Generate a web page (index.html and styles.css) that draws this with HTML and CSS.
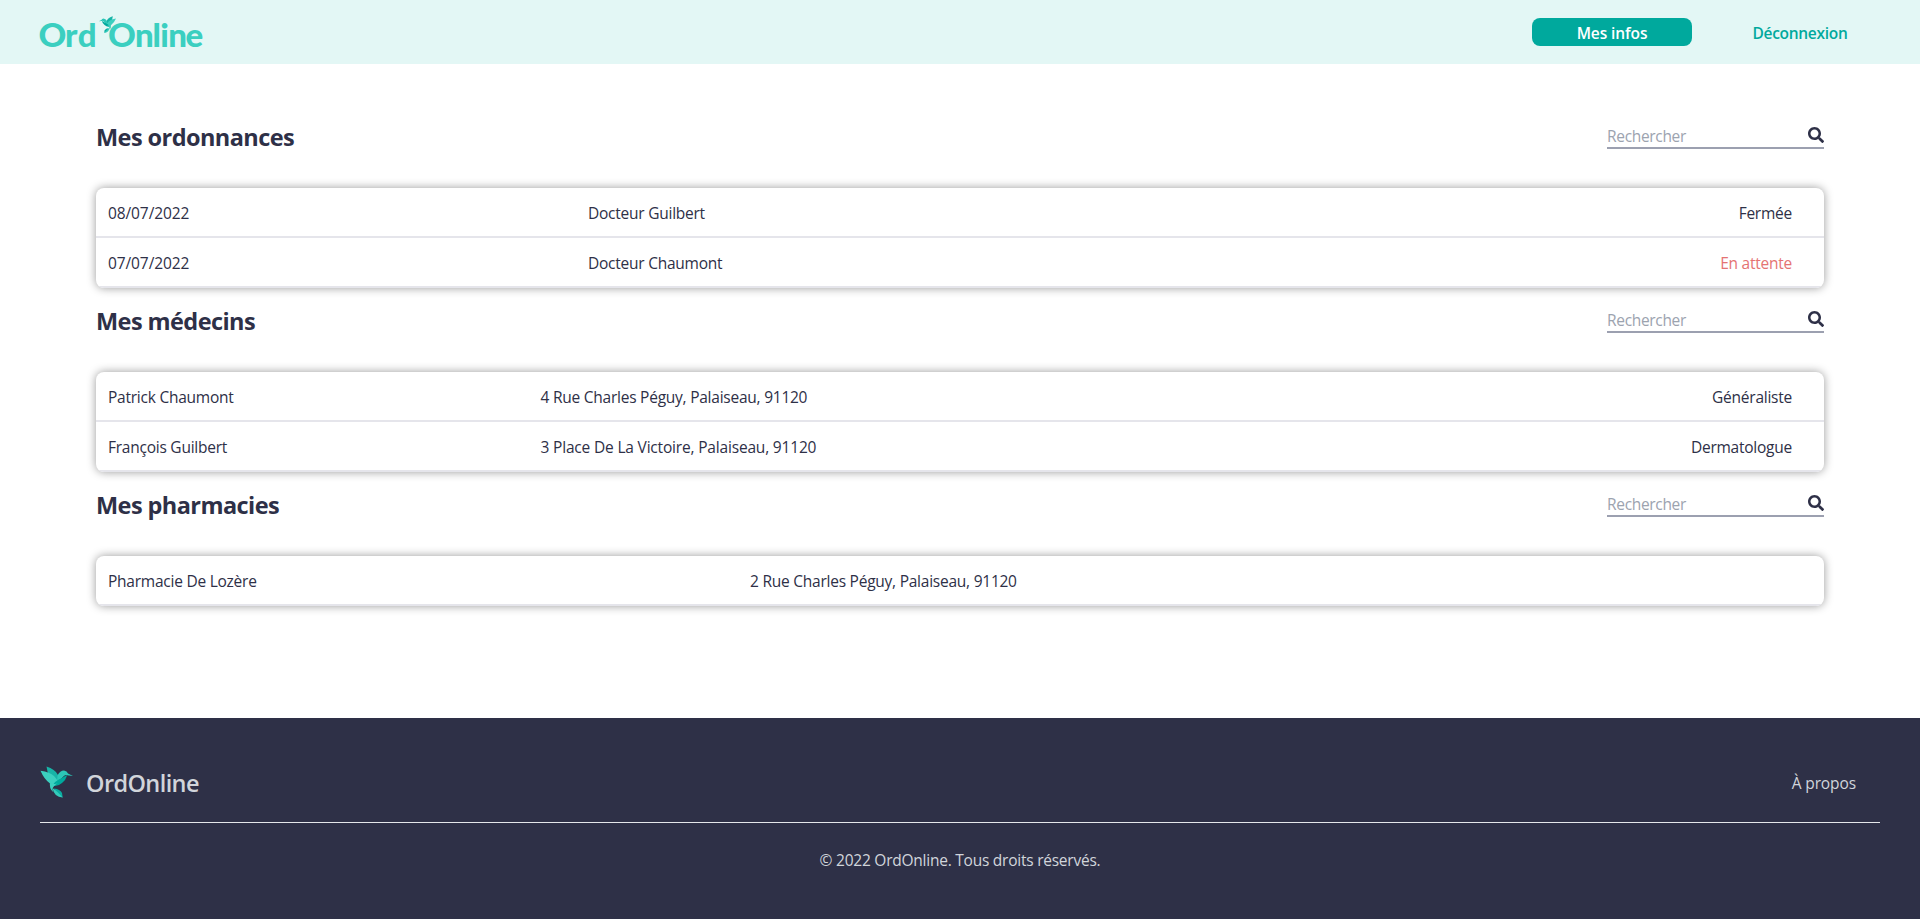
FILE: index.html
```html
<!DOCTYPE html>
<html lang="fr">
<head>
<meta charset="utf-8">
<title>OrdOnline</title>
<link rel="stylesheet" href="styles.css">
</head>
<body>
<svg class="defs" width="0" height="0">
  <symbol id="bird" viewBox="0 0 33 32">
    <path fill="#18b3a7" d="M6.500 0.500Q15 3 18 9L18 16L8 8Z"/>
    <path fill="#3ccfbf" d="M0.500 4.700Q10 6 14 10Q17 13 18 16L13 20Q10 19 10 17.500Q4 13 0.500 4.700Z"/>
    <path fill="#2cc6b7" d="M17.500 9.500Q20 4.500 24 4.500Q27 5 28 7.500L33 10L27 9.300Q25 8 22 12L17 16Z"/>
    <path fill="#00a99d" d="M27 9.300Q26 14 22 17Q18 20.500 14 20L12 21Q14 15 22 12Q25 10 27 9.300Z"/>
    <path fill="#3ccfbf" d="M10 17Q15 19 18 17Q13 20 12.500 23L13 26Q9 22 10 17Z"/>
    <path fill="#0aaea2" d="M14 22.500Q20 23 22 27L22.700 31.500Q17 30 14 22.500Z"/>
    <path fill="#35cbbb" d="M12.500 22Q17 25 22.700 31.500Q14 31 12.500 22Z"/>
  </symbol>
  <symbol id="search" viewBox="0 0 512 512">
    <path d="M505 442.700L405.300 343c-4.500-4.500-10.600-7-17-7H372c27.600-35.300 44-79.700 44-128C416 93.100 322.900 0 208 0S0 93.100 0 208s93.100 208 208 208c48.300 0 92.700-16.400 128-44v16.300c0 6.400 2.500 12.500 7 17l99.700 99.700c9.400 9.400 24.600 9.400 33.900 0l28.300-28.300c9.400-9.400 9.400-24.600.1-34zM208 336c-70.700 0-128-57.200-128-128 0-70.700 57.200-128 128-128 70.700 0 128 57.200 128 128 0 70.700-57.200 128-128 128z"/>
  </symbol>
</svg>

<header class="topbar">
  <svg class="logo" width="180" height="64" viewBox="32 0 180 64" aria-label="Ord'Online">
    <text class="logo-text" transform="translate(38.600 47.200) scale(1.040 1)">O</text>
    <text class="logo-text" y="47.200" x="65 77.800">rd</text>
    <text class="logo-text" transform="translate(108 47.200) scale(1.040 1)">O</text>
    <text class="logo-text" y="47.200" x="135 152.500 160.300 168.300 185.600">nline</text>
    <g transform="translate(116.500 16) scale(-1 1)"><use href="#bird" width="18" height="17"/></g>
  </svg>
  <nav class="nav">
    <a class="nav-link primary">Mes infos</a>
    <a class="nav-link">Déconnexion</a>
  </nav>
</header>

<main class="content">
  <section class="block">
    <div class="block-head">
      <h2 class="title">Mes ordonnances</h2>
      <div class="search"><span class="placeholder">Rechercher</span><svg class="icon"><use href="#search"/></svg></div>
    </div>
    <div class="card orders">
      <div class="row"><span class="date">08/07/2022</span><span>Docteur Guilbert</span><span>Fermée</span></div>
      <div class="row"><span class="date">07/07/2022</span><span>Docteur Chaumont</span><span class="pending">En attente</span></div>
    </div>
  </section>
  <section class="block">
    <div class="block-head">
      <h2 class="title">Mes médecins</h2>
      <div class="search"><span class="placeholder">Rechercher</span><svg class="icon"><use href="#search"/></svg></div>
    </div>
    <div class="card doctors">
      <div class="row"><span>Patrick Chaumont</span><span>4 Rue Charles Péguy, Palaiseau, 91120</span><span>Généraliste</span></div>
      <div class="row"><span>François Guilbert</span><span class="wide">3 Place De La Victoire, Palaiseau, 91120</span><span>Dermatologue</span></div>
    </div>
  </section>
  <section class="block">
    <div class="block-head">
      <h2 class="title">Mes pharmacies</h2>
      <div class="search"><span class="placeholder">Rechercher</span><svg class="icon"><use href="#search"/></svg></div>
    </div>
    <div class="card pharmacies">
      <div class="row"><span>Pharmacie De Lozère</span><span>2 Rue Charles Péguy, Palaiseau, 91120</span></div>
    </div>
  </section>
</main>

<footer class="footer">
  <div class="footer-top">
    <div class="brand"><svg class="brand-bird" width="33" height="32"><use href="#bird"/></svg><span class="brand-name">OrdOnline</span></div>
    <a class="about">À propos</a>
  </div>
  <p class="copyright">© 2022 OrdOnline. Tous droits réservés.</p>
</footer>
</body>
</html>
```
FILE: styles.css
```css
* { box-sizing: border-box; }
body {
  margin: 0;
  height: 919px;
  display: flex;
  flex-direction: column;
  overflow: hidden;
  background: #fff;
  color: #2e3047;
  font: 15.5px/24px "Open Sans", "Noto Sans", sans-serif;
  letter-spacing: -0.24px;
}
.defs { position: absolute; }
.topbar {
  height: 64px;
  flex: none;
  display: flex;
  justify-content: space-between;
  align-items: center;
  padding: 0 40px 0 32px;
  background: #e3f7f5;
}
.logo-text {
  font: 900 33px Lato, sans-serif;
  letter-spacing: 0;
  fill: #3bcfc0;
}
.nav { display: flex; gap: 28px; }
.nav-link {
  width: 160px;
  height: 28px;
  border-radius: 8px;
  text-align: center;
  line-height: 31px;
  font-weight: 600;
  letter-spacing: -0.3px;
  color: #00a99d;
}
.primary { background: #00a99d; color: #fff; letter-spacing: -0.1px; }

.content { height: 654px; flex: none; padding: 40px 96px 0; }
.block-head {
  height: 84px;
  display: flex;
  justify-content: space-between;
  align-items: flex-start;
}
.title {
  margin: 17px 0 0;
  font-size: 23.5px;
  line-height: 32px;
  font-weight: 700;
  letter-spacing: -0.57px;
}
.search {
  width: 217px;
  height: 30px;
  margin-top: 15px;
  display: flex;
  justify-content: space-between;
  border-bottom: 2px solid #9ca0b0;
}
.placeholder { line-height: 34px; color: #9ca3af; letter-spacing: -0.32px; }
.icon { width: 16px; height: 16px; margin-top: 8px; fill: #2e3047; }
.card {
  border-radius: 8px;
  overflow: hidden;
  box-shadow: 0 0 10px rgba(0, 0, 0, 0.4);
}
.row {
  height: 50px;
  display: grid;
  align-items: center;
  padding: 1px 32px 0 12px;
  border-bottom: 2px solid #e5e5eb;
}
.row span:nth-child(3) { text-align: right; }
.orders .row { grid-template-columns: 480px 1fr 300px; }
.doctors .row { grid-template-columns: 432.5px 1fr 300px; }
.pharmacies .row { grid-template-columns: 642px 1fr; }
.date { letter-spacing: -0.1px; }
.wide { letter-spacing: -0.18px; }
.pending { color: #e57373; }

.footer {
  flex: 1;
  padding: 0 40px;
  background: #2e3047;
  color: #d1d5db;
}
.footer-top {
  height: 105px;
  display: flex;
  justify-content: space-between;
  padding: 48px 24px 0 0;
  border-bottom: 1px solid #e5e7eb;
}
.brand { display: flex; gap: 13px; height: 32px; }
.brand-name { font-size: 23.5px; line-height: 34px; font-weight: 600; letter-spacing: -0.6px; }
.about { line-height: 35px; letter-spacing: -0.1px; }
.copyright { margin: 25px 0 0; text-align: center; }
```
